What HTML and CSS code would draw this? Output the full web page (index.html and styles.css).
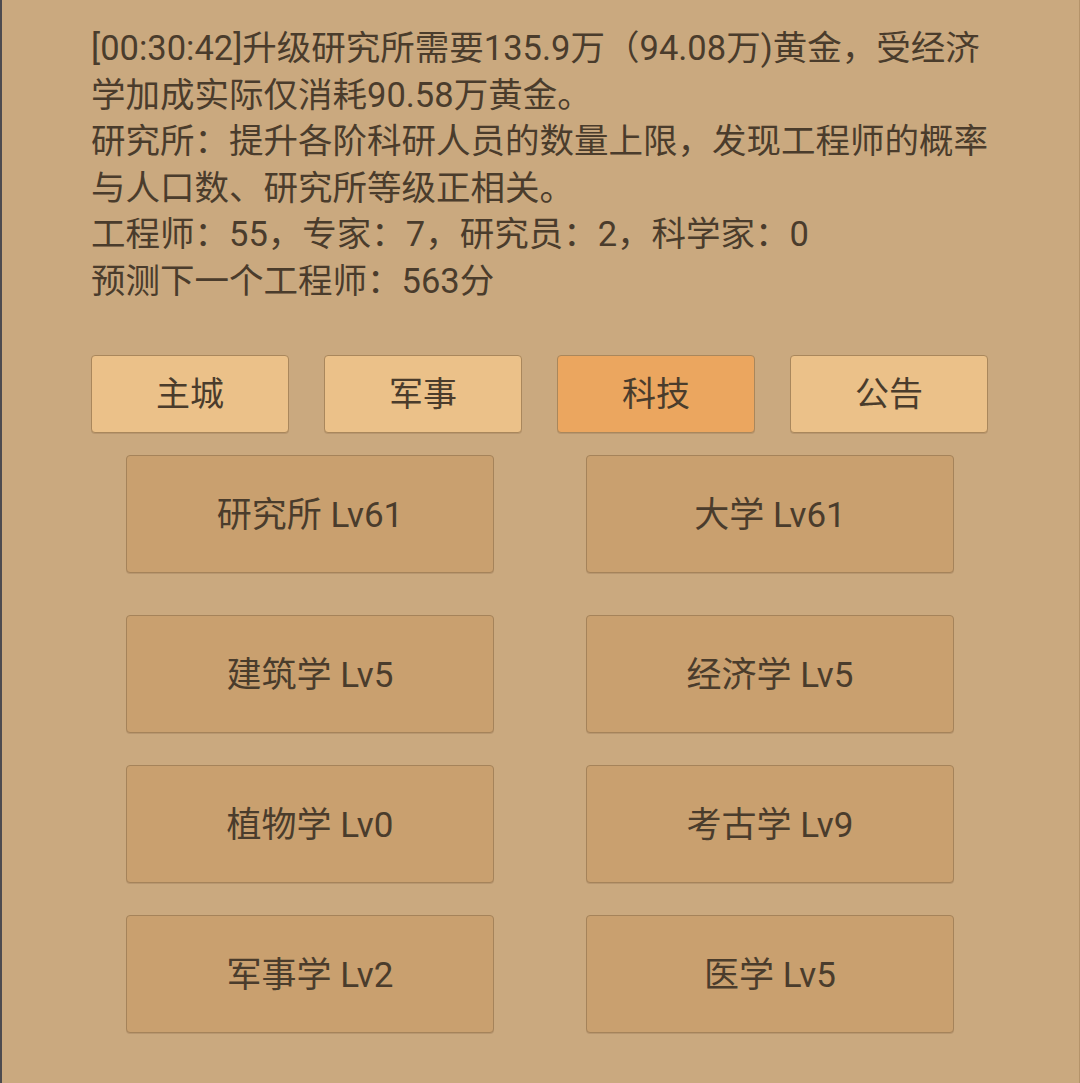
FILE: index.html
```html
<!DOCTYPE html>
<html lang="zh">
<head>
<meta charset="utf-8">
<link rel="stylesheet" href="styles.css">
</head>
<body>
<div class="screen">
  <div class="info">
    <p class="line">[00:30:42]升级研究所需要135.9万（94.08万)黄金，受经济学加成实际仅消耗90.58万黄金。</p>
    <p class="line">研究所：提升各阶科研人员的数量上限，发现工程师的概率与人口数、研究所等级正相关。</p>
    <p class="line">工程师：55，专家：7，研究员：2，科学家：0</p>
    <p class="line">预测下一个工程师：563分</p>
  </div>
  <div class="tabs">
    <div class="tab">主城</div>
    <div class="tab">军事</div>
    <div class="tab active">科技</div>
    <div class="tab">公告</div>
  </div>
  <div class="grid">
    <div class="btn first">研究所 Lv61</div>
    <div class="btn first">大学 Lv61</div>
    <div class="btn">建筑学 Lv5</div>
    <div class="btn">经济学 Lv5</div>
    <div class="btn">植物学 Lv0</div>
    <div class="btn">考古学 Lv9</div>
    <div class="btn">军事学 Lv2</div>
    <div class="btn">医学 Lv5</div>
  </div>
</div>
</body>
</html>
```

FILE: styles.css
```css
html, body {
  margin: 0;
  padding: 0;
}
body {
  width: 1080px;
  height: 1083px;
  background: #caa97f;
  font-family: Roboto, "Noto Sans CJK SC", sans-serif;
  color: #4a3c2c;
  overflow: hidden;
}
.screen {
  box-sizing: border-box;
  width: 1080px;
  height: 1083px;
  border-left: 2px solid #4d4b4f;
  border-right: 1px solid #b4936a;
  padding: 25px 89px 0 89px;
}
.info {
  font-size: 34.5px;
  line-height: 46.6px;
}
.line {
  margin: 0;
}
.tabs {
  margin-top: 50px;
  display: flex;
  gap: 35px;
}
.tab {
  box-sizing: border-box;
  width: 198px;
  height: 78px;
  padding-bottom: 5px;
  background: #ebc189;
  border: 1px solid #a9875c;
  border-radius: 4px;
  box-shadow: 0 1px 0 rgba(80, 55, 25, 0.15);
  display: flex;
  align-items: center;
  justify-content: center;
  font-size: 34px;
}
.tab.active {
  background: #eba65f;
}
.grid {
  margin: 22px 0 0 35px;
  display: grid;
  grid-template-columns: 368px 368px;
  column-gap: 92px;
  row-gap: 32px;
}
.btn {
  box-sizing: border-box;
  height: 118px;
  padding-bottom: 4px;
  background: #c9a06f;
  border: 1px solid #a5835a;
  border-radius: 4px;
  box-shadow: 0 1px 0 rgba(80, 55, 25, 0.15);
  display: flex;
  align-items: center;
  justify-content: center;
  font-size: 35px;
}
.btn.first {
  margin-bottom: 10px;
}
```
